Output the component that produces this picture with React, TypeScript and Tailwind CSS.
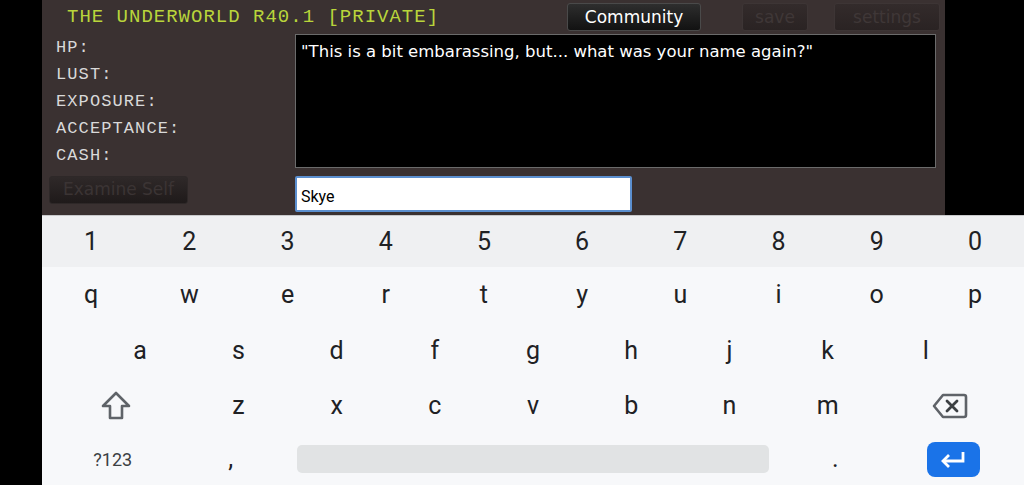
import React from 'react';

const numbers = ['1', '2', '3', '4', '5', '6', '7', '8', '9', '0'];
const rowQ = ['q', 'w', 'e', 'r', 't', 'y', 'u', 'i', 'o', 'p'];
const rowA = ['a', 's', 'd', 'f', 'g', 'h', 'j', 'k', 'l'];
const rowZ = ['z', 'x', 'c', 'v', 'b', 'n', 'm'];

const stats = ['HP:', 'LUST:', 'EXPOSURE:', 'ACCEPTANCE:', 'CASH:'];

function Key({ label }: { label: string }) {
  return (
    <div className="flex-1 flex items-center justify-center text-[25px] text-[#202124]">
      {label}
    </div>
  );
}

function ShiftIcon() {
  return (
    <svg width="32" height="30" viewBox="0 0 32 30" fill="none">
      <path
        d="M16 2 L3 15 H10 V27 H22 V15 H29 Z"
        stroke="#5f6368"
        strokeWidth="2.6"
        strokeLinejoin="round"
      />
    </svg>
  );
}

function BackspaceIcon() {
  return (
    <svg width="36" height="28" viewBox="0 0 36 28" fill="none">
      <path
        d="M11 3 H32 a2 2 0 0 1 2 2 V23 a2 2 0 0 1 -2 2 H11 L2 14 Z"
        stroke="#5f6368"
        strokeWidth="2.6"
        strokeLinejoin="round"
      />
      <path d="M15 9 L25 19 M25 9 L15 19" stroke="#3c4043" strokeWidth="2.8" strokeLinecap="round" />
    </svg>
  );
}

function EnterIcon() {
  return (
    <svg width="28" height="20" viewBox="0 0 28 20" fill="none">
      <path d="M24 3 V12 H5" stroke="white" strokeWidth="2.8" />
      <path d="M10 6 L4 12 L10 18" stroke="white" strokeWidth="2.8" strokeLinejoin="miter" />
    </svg>
  );
}

function GameButton({ label, dim, width }: { label: string; dim?: boolean; width: string }) {
  return (
    <div
      className={`${width} h-[28px] pt-[1px] flex items-center justify-center rounded-[3px] border ${
        dim
          ? 'border-[#3d3535] bg-gradient-to-b from-[#332b2b] to-[#2a2323] text-[#3f3737]'
          : 'border-[#4a4a4a] bg-gradient-to-b from-[#2e2e2e] to-[#121212] text-white'
      } text-[17px]`}
      style={{ fontFamily: '"DejaVu Sans", sans-serif' }}
    >
      {label}
    </div>
  );
}

export default function App() {
  const mono = { fontFamily: '"Liberation Mono", "DejaVu Sans Mono", monospace' };

  return (
    <div className="w-[1024px] h-[485px] bg-black overflow-hidden flex flex-col">
      <div className="flex h-[215px]">
        <div className="w-[42px]" />
        <div className="w-[903px] h-[215px] bg-[#3a3131] flex flex-col">
          <div className="flex items-start h-[34px]">
            <div
              className="w-[525px] pl-[25px] pt-[5px] text-[19px] leading-[24px] tracking-[1px] text-[#b9d53b]"
              style={mono}
            >
              THE UNDERWORLD R40.1 [PRIVATE]
            </div>
            <div className="pt-[3px] flex">
              <GameButton label="Community" width="w-[134px]" />
              <div className="ml-[41px]">
                <GameButton label="save" dim width="w-[66px]" />
              </div>
              <div className="ml-[26px]">
                <GameButton label="settings" dim width="w-[106px]" />
              </div>
            </div>
          </div>
          <div className="flex">
            <div className="w-[253px] flex flex-col">
              <div className="pl-[14px] text-[#d9d9d9] text-[17px] leading-[27px] tracking-[1.1px]" style={mono}>
                {stats.map((s) => (
                  <div key={s}>{s}</div>
                ))}
              </div>
              <div
                className="mt-[7px] ml-[7px] w-[139px] h-[28px] rounded-[3px] border border-[#2e2828] bg-gradient-to-b from-[#2f2929] to-[#1f1a1a] flex items-center justify-center text-[17px] text-[#3b3434]"
                style={{ fontFamily: '"DejaVu Sans", sans-serif' }}
              >
                Examine Self
              </div>
            </div>
            <div className="flex flex-col">
              <div
                className="w-[641px] h-[134px] bg-black border border-[#6b6b6b] pl-[5px] pt-[5px] text-white text-[16.5px] leading-[24px]"
                style={{ fontFamily: '"DejaVu Sans", sans-serif' }}
              >
                "This is a bit embarassing, but... what was your name again?"
              </div>
              <div
                className="mt-[8px] w-[337px] h-[36px] bg-white border-[2px] border-[#5b8fcf] rounded-[2px] pl-[4px] pt-[5px] flex items-center text-[16px] text-black"
                style={{ fontFamily: 'Roboto, sans-serif' }}
              >
                Skye
              </div>
            </div>
          </div>
        </div>
        <div className="flex-1" />
      </div>

      <div
        className="ml-[42px] w-[982px] h-[270px] bg-[#f7f8fa] border-t border-[#c8c9cb] flex flex-col"
        style={{ fontFamily: 'Roboto, sans-serif' }}
      >
        <div className="h-[51px] bg-[#eff0f2] flex">
          {numbers.map((n) => (
            <Key key={n} label={n} />
          ))}
        </div>
        <div className="h-[56px] flex">
          {rowQ.map((k) => (
            <Key key={k} label={k} />
          ))}
        </div>
        <div className="h-[55px] flex px-[49px]">
          {rowA.map((k) => (
            <Key key={k} label={k} />
          ))}
        </div>
        <div className="h-[55px] flex">
          <div className="flex-[1.5] flex items-center justify-center">
            <ShiftIcon />
          </div>
          {rowZ.map((k) => (
            <Key key={k} label={k} />
          ))}
          <div className="flex-[1.5] flex items-center justify-center">
            <BackspaceIcon />
          </div>
        </div>
        <div className="flex-1 flex">
          <div className="flex-[1.5] flex items-center justify-center text-[18px] text-[#3c4043]">?123</div>
          <Key label="," />
          <div className="flex-[5] flex items-center px-[19px]">
            <div className="w-full h-[28px] rounded-[5px] bg-[#e1e3e4]" />
          </div>
          <Key label="." />
          <div className="flex-[1.5] flex items-center justify-center">
            <div className="w-[53px] h-[35px] rounded-[8px] bg-[#1a73e8] flex items-center justify-center">
              <EnterIcon />
            </div>
          </div>
        </div>
      </div>
    </div>
  );
}
